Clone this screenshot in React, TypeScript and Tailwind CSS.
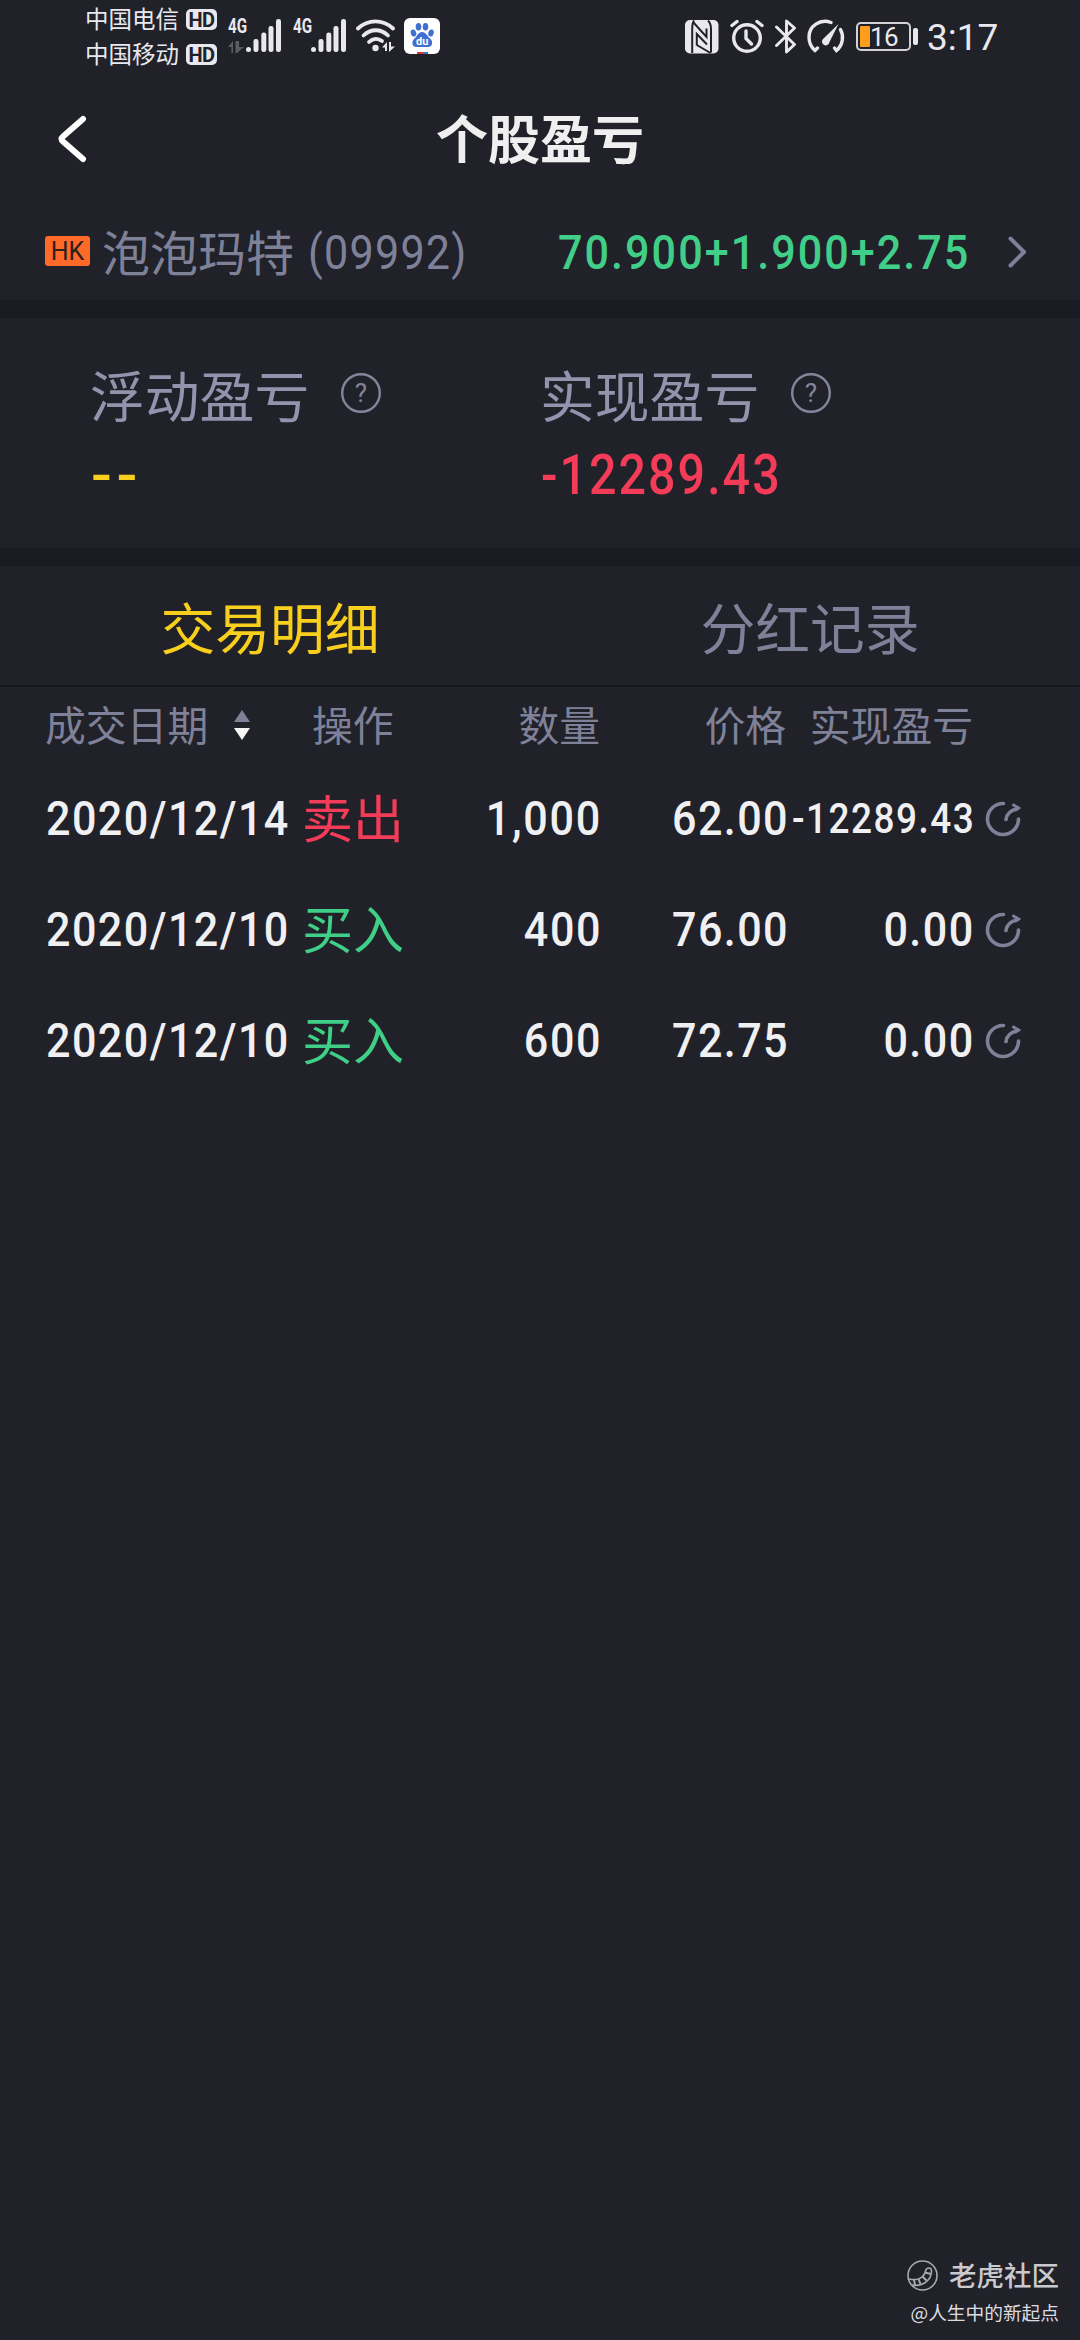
import type { ReactNode } from 'react';

type Side = 'buy' | 'sell';

interface Trade {
  date: string;
  side: Side;
  quantity: string;
  price: string;
  pnl: string;
}

const trades: Trade[] = [
  { date: '2020/12/14', side: 'sell', quantity: '1,000', price: '62.00', pnl: '-12289.43' },
  { date: '2020/12/10', side: 'buy', quantity: '400', price: '76.00', pnl: '0.00' },
  { date: '2020/12/10', side: 'buy', quantity: '600', price: '72.75', pnl: '0.00' },
];

const rowGrid = 'grid grid-cols-[258px_100px_197px_186px_187px_1fr] items-center pl-[45px]';

// narrow, widely spaced figures
const figures = "inline-block scale-x-[0.88] font-['Roboto',sans-serif] whitespace-nowrap";

function Carrier({ name }: { name: string }) {
  return (
    <div className="flex h-[35px] items-center">
      <span className="-mt-[3px] w-[101px] text-[23.5px] leading-[35px] whitespace-nowrap">{name}</span>
      <span className="flex h-[21px] w-[31px] items-center justify-center rounded-[5px] bg-[#e8e8ee] font-['Roboto',sans-serif] text-[20px] leading-none font-bold tracking-[-0.5px] text-[#212129]">
        HD
      </span>
    </div>
  );
}

function Signal({ dim }: { dim?: boolean }) {
  return (
    <div className="relative h-[36px] w-[54px]">
      <span className="absolute -top-[5px] left-0 origin-left scale-x-[0.76] font-['Roboto',sans-serif] text-[20px] leading-[26px] font-bold">
        4G
      </span>
      <svg className="h-[36px] w-[54px]" viewBox="0 0 54 36" fill="#e8e8ee">
        {dim && <path d="M0 29 L5 23 V35 H3.400 V29 Z M9 23 H7.500 V35 L9 35 L16 29 H11 V23 Z" fill="#5b5b64" />}
        <circle cx="20.500" cy="31.500" r="2.500" />
        <rect x="25.500" y="21" width="5" height="13" rx="2.300" />
        <rect x="33.300" y="14.500" width="5" height="19.500" rx="2.300" />
        <rect x="40.500" y="8" width="5" height="26" rx="2.300" />
        <rect x="48" y="1" width="5" height="33" rx="2.300" />
      </svg>
    </div>
  );
}

function WifiIcon() {
  return (
    <svg className="h-[36px] w-[40px]" viewBox="0 0 40 36" fill="none" stroke="#e8e8ee" strokeWidth="3.8" strokeLinecap="round">
      <path d="M2 10.500 C12 1 27 1 37 10.500" />
      <path d="M7.500 17.500 C14.500 10.500 25 10.500 32 17.500" />
      <path d="M13 24 C17 20 22 20 26 23" />
      <circle cx="19.500" cy="30" r="3.200" fill="#e8e8ee" stroke="none" />
      <path d="M26 29.500 L31 24 V33 H29 V29.500 Z M33 24 V34 L39 28.500 H35 V24 Z" fill="#e8e8ee" stroke="none" />
    </svg>
  );
}

function BaiduIcon() {
  return (
    <svg className="h-[36px] w-[36px]" viewBox="0 0 36 36">
      <rect width="36" height="36" rx="6" fill="#fff" />
      <g fill="#3f6fd0">
        <ellipse cx="9.500" cy="15" rx="2.700" ry="3.600" transform="rotate(-15 9.500 15)" />
        <ellipse cx="14.500" cy="8.700" rx="2.800" ry="3.800" />
        <ellipse cx="21.500" cy="8.700" rx="2.800" ry="3.800" />
        <ellipse cx="27" cy="15" rx="2.700" ry="3.600" transform="rotate(15 27 15)" />
        <path d="M18 14 C22 14 23 18 26 20.500 C30 24 28 29 24 29 H12.500 C8 29 7 24 10.500 20.500 C13.500 18 14 14 18 14 Z" />
      </g>
      <text x="12" y="27" fontSize="11" fontWeight="700" fill="#fff" fontFamily="Roboto, sans-serif">
        du
      </text>
      <rect x="13" y="34" width="6" height="2" fill="#d0353c" />
      <rect x="19" y="34" width="5" height="2" fill="#3f6fd0" />
    </svg>
  );
}

function NfcIcon() {
  return (
    <svg className="h-[34px] w-[34px]" viewBox="0 0 34 34">
      <rect width="33.500" height="33.500" rx="5" fill="#e8e8ee" />
      <g fill="none" stroke="#212129" strokeWidth="2">
        <path d="M9 0.500 C7.300 3 7.200 5 7.200 9 V33" />
        <path d="M8 2 L21.500 17 V8.500" />
        <path d="M11.800 25.500 V14 L22 24.500" />
        <path d="M11.800 25 L25.500 33" />
        <path d="M23 0.500 C25.500 3 26 5 26 9 V32.500" />
      </g>
    </svg>
  );
}

function AlarmIcon() {
  return (
    <svg className="h-[35px] w-[34px]" viewBox="0 0 34 35" fill="none" stroke="#e8e8ee" strokeWidth="3.4" strokeLinecap="round">
      <circle cx="17" cy="19" r="13.300" />
      <path d="M2 6.500 L7 2.500 M32 6.500 L27 2.500" />
      <path d="M16 12 V19.500 L21.500 25" strokeLinejoin="round" />
    </svg>
  );
}

function BluetoothIcon() {
  return (
    <svg className="h-[35px] w-[22px]" viewBox="0 0 22 35" fill="none" stroke="#e8e8ee" strokeWidth="2.9" strokeLinecap="round" strokeLinejoin="round">
      <path d="M1.500 8 L19.500 25.500 L11.500 33 V2 L19.500 9 L1.500 26.500" />
    </svg>
  );
}

function GaugeIcon() {
  return (
    <svg className="h-[35px] w-[38px]" viewBox="0 0 38 35" fill="none" stroke="#e8e8ee" strokeWidth="3.4" strokeLinecap="round">
      <path d="M24 3.500 C13 -0.500 2 7 2 18 C2 24 4.500 28.500 8 31.500 L10.500 29" />
      <path d="M33.500 10.500 C37 17 36 26 29.500 31.500 L27.500 29" />
      <path d="M31.500 5 L22.500 23 A3.800 3.800 0 1 1 16.500 19.500 Z" fill="#e8e8ee" stroke="none" />
    </svg>
  );
}

function Battery() {
  return (
    <div className="flex items-center">
      <div className="flex h-[29px] w-[55px] items-center rounded-[5px] border-2 border-[#d2d2d8] pl-[2px]">
        <div className="h-[21px] w-[10px] rounded-[1px] bg-[#ff9d1c]" />
        <span className="font-['Roboto',sans-serif] text-[26px] leading-[26px] tracking-[-0.5px]">16</span>
      </div>
      <div className="ml-[2px] h-[17px] w-[5px] rounded-[2px] bg-[#e8e8ee]" />
    </div>
  );
}

function StatusBar() {
  return (
    <div className="flex h-[80px] shrink-0 pl-[85px] text-[#e8e8ee]">
      <div className="mt-[2px] w-[143px]">
        <Carrier name="中国电信" />
        <Carrier name="中国移动" />
      </div>
      <div className="mt-[18px] flex">
        <Signal dim />
        <div className="ml-[11px]">
          <Signal />
        </div>
        <div className="ml-[9px]">
          <WifiIcon />
        </div>
        <div className="ml-[8px]">
          <BaiduIcon />
        </div>
      </div>
      <div className="mt-[19px] ml-[245px] flex h-[35px] items-center">
        <NfcIcon />
        <div className="ml-[11px]">
          <AlarmIcon />
        </div>
        <div className="ml-[11px]">
          <BluetoothIcon />
        </div>
        <div className="ml-[10px]">
          <GaugeIcon />
        </div>
        <div className="ml-[11px]">
          <Battery />
        </div>
        <span className="mt-[2px] ml-[9px] font-['Roboto',sans-serif] text-[37px] leading-[35px]">3:17</span>
      </div>
    </div>
  );
}

function Summary({ label, children }: { label: string; children: ReactNode }) {
  return (
    <div className="w-[450px]">
      <div className="flex h-[72px] items-center">
        <span className="-mt-[6px] -ml-[1px] w-[220px] text-[54.8px] leading-[72px] whitespace-nowrap text-[#9294ad]">{label}</span>
        <svg className="-mt-[6px] ml-[31px] h-[40px] w-[40px]" viewBox="0 0 40 40">
          <circle cx="20" cy="20" r="18.800" fill="none" stroke="#83869b" strokeWidth="2.4" />
          <text x="20" y="29" textAnchor="middle" fontSize="26" fill="#83869b" fontFamily="Roboto, sans-serif">
            ?
          </text>
        </svg>
      </div>
      <div className="-mt-[3px] flex h-[84px] text-[55px] leading-[84px]">{children}</div>
    </div>
  );
}

function ShareIcon() {
  return (
    <svg className="ml-[12px] h-[36px] w-[38px]" viewBox="0 0 38 36" fill="none" stroke="#7f8199" strokeWidth="3.6" strokeLinecap="round">
      <path d="M18.500 2.500 A15.500 15.500 0 1 0 33.500 18" />
      <path d="M21 18.500 C21.500 13.500 25 9.500 32.500 7.500" />
      <path d="M28.500 4 L33.500 7 L30.500 9" strokeWidth="3" />
    </svg>
  );
}

function TradeRow({ trade }: { trade: Trade }) {
  const sell = trade.side === 'sell';
  // long amounts drop to a smaller size so that they fit the column
  const long = trade.pnl.length > 8;
  return (
    <div className={`${rowGrid} h-[111px] text-[49px] leading-[60px] text-[#f0f0f2]`}>
      <span className={`${figures} ml-px origin-left justify-self-start font-medium tracking-[1.6px]`}>{trade.date}</span>
      <span className={`-mt-[5px] -ml-[1px] text-[51px] whitespace-nowrap ${sell ? 'text-[#f43c58]' : 'text-[#3fcf87]'}`}>
        {sell ? '卖出' : '买入'}
      </span>
      <span className={`${figures} -mr-[2px] origin-right justify-self-end font-medium tracking-[1.9px]`}>{trade.quantity}</span>
      <span className={`${figures} -mr-[3px] origin-right justify-self-end font-medium tracking-[1.6px]`}>{trade.price}</span>
      <span
        className={`${figures} -mr-[2px] origin-right justify-self-end font-medium ${
          long ? 'text-[42px] tracking-[1.7px]' : 'tracking-[1.6px]'
        }`}
      >
        {trade.pnl}
      </span>
      <ShareIcon />
    </div>
  );
}

function App() {
  return (
    <div className="flex h-[2340px] w-[1080px] flex-col overflow-hidden bg-[#212129] font-['Noto_Sans_CJK_SC',sans-serif]">
      <StatusBar />

      {/* Title bar */}
      <header className="grid h-[120px] shrink-0 grid-cols-[120px_1fr_120px] items-center">
        <svg className="-mt-[3px] ml-[55px] h-[48px] w-[32px]" viewBox="0 0 32 48" fill="none" stroke="#fff" strokeWidth="6" strokeLinecap="round" strokeLinejoin="round">
          <path d="M28 4 L8 21.500 Q5 24 8 26.500 L28 44" />
        </svg>
        <h1 className="-mt-[6px] text-center text-[52px] leading-[80px] font-bold text-[#efeff0]">个股盈亏</h1>
      </header>

      {/* Quote */}
      <div className="flex h-[100px] shrink-0 items-center pt-[3px] pl-[45px] whitespace-nowrap">
        <span className="-mt-px flex h-[30px] w-[45px] items-center justify-center rounded-[3px] bg-[#ff6a28] font-['Roboto',sans-serif] text-[25px] leading-none text-[#30201c]">
          HK
        </span>
        <span className="-mt-[3px] ml-[12px] w-[206px] text-[48px] leading-[60px] text-[#7f8199]">泡泡玛特</span>
        <div className="mt-[2px] flex w-[250px] text-[49px] leading-[60px] text-[#7f8199]">
          <span className={`${figures} origin-left tracking-[1.4px]`}>(09992)</span>
        </div>
        <div className="mt-[2px] flex w-[449px] text-[49px] leading-[60px] text-[#41ce88]">
          <span className={`${figures} origin-left font-medium tracking-[2.3px]`}>70.900+1.900+2.75</span>
        </div>
        <svg className="h-[34px] w-[20px]" viewBox="0 0 20 34" fill="none" stroke="#7f8199" strokeWidth="4" strokeLinecap="round" strokeLinejoin="round">
          <path d="M3.500 3.500 L17 17 L3.500 30.500" />
        </svg>
      </div>

      <div className="h-[18px] shrink-0 bg-[#1b1b24]" />

      {/* Profit and loss */}
      <section className="flex h-[230px] shrink-0 pt-[42px] pl-[91px]">
        <Summary label="浮动盈亏">
          <span className="mt-[4px] inline-block origin-left scale-x-[1.12] font-['Roboto',sans-serif] font-medium tracking-[4px] text-[#f7cf1c]">
            --
          </span>
        </Summary>
        <Summary label="实现盈亏">
          <span className={`${figures} mt-[4px] origin-left font-medium tracking-[2.3px] text-[#f43c58]`}>-12289.43</span>
        </Summary>
      </section>

      <div className="h-[18px] shrink-0 bg-[#1b1b24]" />

      {/* Tabs */}
      <nav className="grid h-[121px] shrink-0 grid-cols-2 border-b-2 border-[#17171e] text-center text-[54.8px] leading-[118px]">
        <span className="text-[#f7cf1c]">交易明细</span>
        <span className="text-[#7f8199]">分红记录</span>
      </nav>

      {/* Column names */}
      <div className={`${rowGrid} h-[76px] shrink-0 text-right text-[40.8px] leading-[60px] whitespace-nowrap text-[#7f8199]`}>
        <div className="-mt-[2px] flex items-center text-left">
          <span>成交日期</span>
          <svg className="mt-[2px] ml-[26px] h-[30px] w-[16px]" viewBox="0 0 16 30">
            <path d="M8 0 L16 12 H0 Z" fill="#7f8199" />
            <path d="M0 18 H16 L8 30 Z" fill="#f5f5f5" />
          </svg>
        </div>
        <span className="-mt-[2px] pl-[9px] text-left">操作</span>
        <span className="-mt-[2px]">数量</span>
        <span className="-mt-[2px]">价格</span>
        <span className="-mt-[2px]">实现盈亏</span>
      </div>

      <main className="grow">
        {trades.map((trade, i) => (
          <TradeRow key={i} trade={trade} />
        ))}
      </main>

      {/* Watermark */}
      <footer className="flex h-[82px] shrink-0 flex-col items-end pr-[21px]">
        <div className="flex h-[34px] items-center text-[27.5px] leading-[34px] font-medium text-[#c9c9ce]">
          <svg className="mr-[11px] h-[31px] w-[31px]" viewBox="0 0 31 31" fill="none" stroke="#a9a9b0" strokeWidth="1.6">
            <circle cx="15.500" cy="15.500" r="14.500" />
            <path d="M2 19 C10 21 17 18 18.500 11 C19.500 7 24.500 7 24.500 11 C24.500 20 16 27 5 25" />
            <path d="M7 20 L8 25 M11.500 19 L13.500 24 M15.500 16.500 L19.500 20.500 M18 12.500 L24 14" strokeWidth="2" />
          </svg>
          <span className="-mt-[2px]">老虎社区</span>
        </div>
        <div className="mt-[4px] text-[18.7px] leading-[32px] text-[#dcdce0]">@人生中的新起点</div>
      </footer>
    </div>
  );
}

export default App;
